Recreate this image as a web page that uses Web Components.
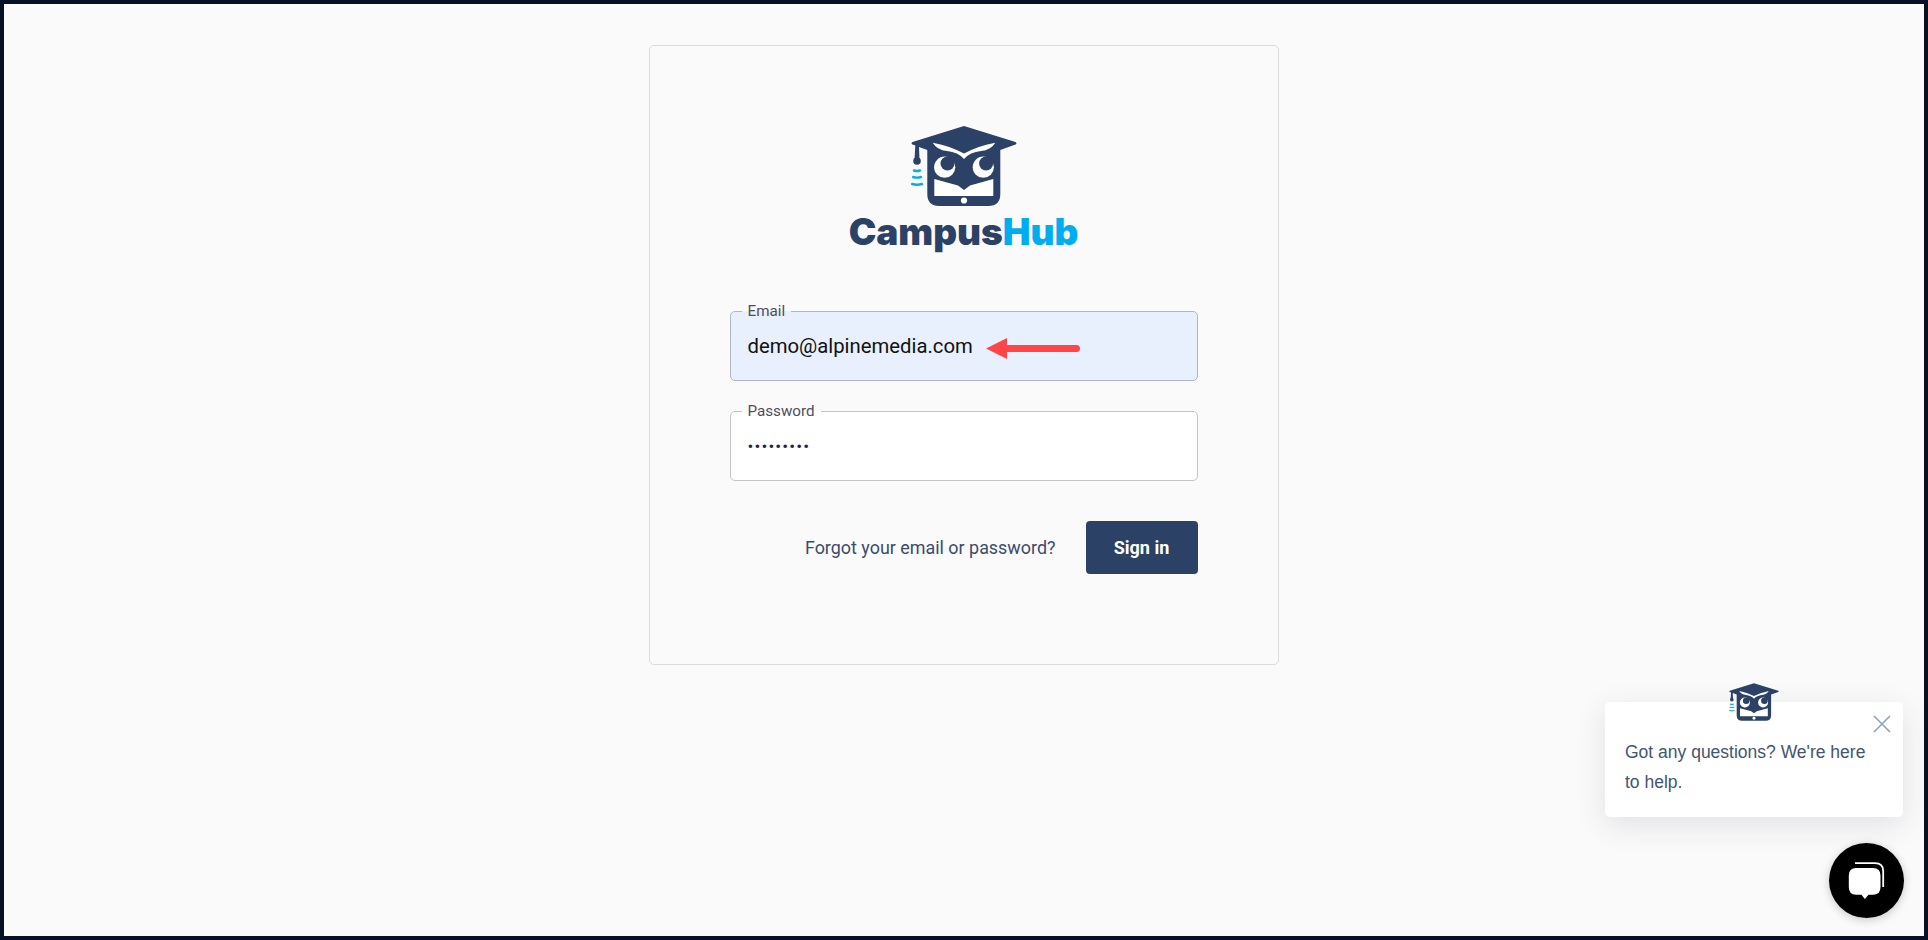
<!DOCTYPE html>
<html>
<head>
<meta charset="utf-8">
<title>CampusHub</title>
<style>
  html, body { margin: 0; height: 100%; }
  body { box-sizing: border-box; height: 940px; border: 4px solid #071126; background: #fafafa; overflow: hidden; position: relative; font-family: Roboto, sans-serif; }
</style>
</head>
<body>
<login-page>
  <login-card>
    <campus-logo slot="logo"></campus-logo>
    <outlined-field label="Email" value="demo@alpinemedia.com" filled arrow></outlined-field>
    <outlined-field label="Password" value="•••••••••" secret></outlined-field>
    <login-actions></login-actions>
  </login-card>
</login-page>
<chat-widget message="Got any questions? We're here to help."></chat-widget>

<script>
// The owl mark is used by both the logo and the chat popup.
const OWL_SVG = `
<svg viewBox="0 0 106 80" width="100%" height="100%" aria-hidden="true">
  <path fill="#2b4165" d="M53 0 L104.5 16 Q106.5 17.3 104.5 18.6 L89.3 24 V68 Q89.3 80 77.3 80 H28.3 Q16.3 80 16.3 68 V24 L8 21 L8.5 34 H3.5 L4.3 19.6 L1.5 18.6 Q-.5 17.3 1.5 16 Z"/>
  <circle cx="6" cy="35" r="3.8" fill="#2b4165"/>
  <g fill="none" stroke="#00aeef" stroke-width="2.4" stroke-linecap="round">
    <path d="M3 44.5 Q6 45.5 9 44.5"/>
    <path d="M2.2 51 Q6 52.2 10 51"/>
    <path d="M1.2 58 Q6 59.4 11 58"/>
  </g>
  <path fill="#fff" d="M21.7 16.7 Q38 19.5 53 27.5 Q68 19.5 84.3 16.7 Q80 24 70 25 Q59 26 53 33 Q47 26 36 25 Q26 24 21.7 16.7 Z"/>
  <circle cx="33.7" cy="41.2" r="10.6" fill="#fff"/>
  <circle cx="72.3" cy="41.2" r="10.6" fill="#fff"/>
  <circle cx="36.5" cy="37.5" r="7" fill="#2b4165"/>
  <circle cx="75.1" cy="37.5" r="7" fill="#2b4165"/>
  <path fill="#fff" d="M23.3 53 L47 59.5 L53 64 L59 59.5 L82.3 53 V70 H23.3 Z"/>
  <circle cx="53" cy="74.5" r="3.1" fill="#fff"/>
</svg>`;

/**
 * Centres the login card on the page.
 */
class LoginPage extends HTMLElement {
  constructor() {
    super();
    this.attachShadow({mode: 'open'});
    this.shadowRoot.innerHTML = `
      <style>
        :host { display: flex; justify-content: center; padding-top: 41px; }
      </style>
      <slot></slot>`;
  }
}

class LoginCard extends HTMLElement {
  constructor() {
    super();
    this.attachShadow({mode: 'open'});
    this.shadowRoot.innerHTML = `
      <style>
        :host { display: block; box-sizing: border-box; width: 630px; height: 620px; margin-left: -1px;
          border: 1px solid #dcdcdc; border-radius: 5px; padding: 80px 80px 0; }
        .logo { display: flex; justify-content: center; margin-bottom: 61px; }
        .fields { display: flex; flex-direction: column; gap: 30px; }
      </style>
      <div class="logo"><slot name="logo"></slot></div>
      <div class="fields"><slot></slot></div>`;
  }
}

class CampusLogo extends HTMLElement {
  constructor() {
    super();
    this.attachShadow({mode: 'open'});
    this.shadowRoot.innerHTML = `
      <style>
        :host { display: flex; flex-direction: column; align-items: center; width: 240px; }
        .mark { width: 106px; height: 80px; }
        .word { font: 900 37px/1 Inter, sans-serif; color: #2b4165; letter-spacing: -.05px; margin-top: 7px; }
        .word b { font-weight: inherit; color: #00aeef; }
      </style>
      <div class="mark">${OWL_SVG}</div>
      <div class="word">Campus<b>Hub</b></div>`;
  }
}

class OutlinedField extends HTMLElement {
  constructor() {
    super();
    this.attachShadow({mode: 'open'});
    const filled = this.hasAttribute('filled');
    const secret = this.hasAttribute('secret');
    this.shadowRoot.innerHTML = `
      <style>
        :host { display: block; position: relative; box-sizing: border-box; height: 70px; padding: 0 17px;
          border: 1px solid ${filled ? '#aeb6cb' : '#c4c4c4'}; border-radius: 5px;
          background: ${filled ? '#e8f0fe' : '#fff'}; }
        .label { position: absolute; left: 11px; top: -10px; padding: 0 6px; height: 18px;
          font-size: 15.2px; line-height: 18px; color: #4d4d62; background: linear-gradient(#fafafa 50%, ${filled ? '#e8f0fe' : '#fff'} 50%); }
        .row { display: flex; align-items: center; gap: 13px; height: 100%; }
        .value { font-size: ${secret ? '17.4px' : '20.3px'}; color: ${secret ? '#1f2440' : '#111'}; letter-spacing: ${secret ? '1.1px' : '0'}; }
        svg { display: block; margin-top: 4px; }
      </style>
      <span class="label">${this.getAttribute('label')}</span>
      <div class="row">
        <span class="value">${this.getAttribute('value')}</span>
        ${this.hasAttribute('arrow') ? `<svg width="94" height="21" viewBox="0 0 94 21"><path fill="#ff4548" d="M0 10.5 L21 0 V7 H90.5 A3.5 3.5 0 0 1 90.5 14 H21 V21 Z"/></svg>` : ''}
      </div>`;
  }
}

class LoginActions extends HTMLElement {
  constructor() {
    super();
    this.attachShadow({mode: 'open'});
    this.shadowRoot.innerHTML = `
      <style>
        :host { display: flex; justify-content: flex-end; align-items: center; gap: 30px; margin-top: 10px; }
        a { font-size: 17.92px; color: #3a4c6c; text-decoration: none; }
        button { width: 112px; height: 53px; border: 0; border-radius: 4px; background: #2b4165; color: #fff;
          font: 700 18px Roboto, sans-serif; }
      </style>
      <a href="#">Forgot your email or password?</a>
      <button type="button">Sign in</button>`;
  }
}

class ChatWidget extends HTMLElement {
  constructor() {
    super();
    this.attachShadow({mode: 'open'});
    this.shadowRoot.innerHTML = `
      <style>
        :host { display: block; position: absolute; left: 1601px; top: 698px; width: 298px; height: 216px; }
        .popup { position: relative; box-sizing: border-box; width: 298px; height: 115px; padding: 35px 20px 0; background: #fff;
          border-radius: 5px; box-shadow: 0 8px 30px rgba(40,50,70,.12);
          font: 17.5px/30px "Liberation Sans", Arial, sans-serif; color: #43556f; }
        .owl { position: absolute; left: 124px; top: -19px; width: 50px; height: 38px; }
        .close { position: absolute; left: 268px; top: 13px; width: 18px; height: 18px; }
        .bubble { position: absolute; left: 224px; top: 141px; width: 75px; height: 75px; border-radius: 50%; background: #000;
          box-shadow: 0 2px 10px rgba(0,0,0,.2); display: flex; align-items: center; justify-content: center; }
      </style>
      <div class="popup">
        <div class="owl">${OWL_SVG}</div>
        <svg class="close" viewBox="0 0 18 18"><path d="M1 1 L17 17 M17 1 L1 17" stroke="#8aa3bf" stroke-width="1.6" fill="none"/></svg>
        ${this.getAttribute('message')}
      </div>
      <div class="bubble">
        <svg width="40" height="40" viewBox="0 0 40 40">
          <path fill="none" stroke="#fff" stroke-width="1.8" d="M8 2.2 H28 Q36.2 2.2 36.2 10 V26"/>
          <path fill="#fff" d="M9 7 H26 Q33.5 7 33.5 14.5 V26 Q33.5 33.8 26 33.8 H21.5 L17.8 38 L14.5 33.8 H9 Q1.8 33.8 1.8 26 V14.5 Q1.8 7 9 7 Z"/>
        </svg>
      </div>`;
  }
}

customElements.define('login-page', LoginPage);
customElements.define('login-card', LoginCard);
customElements.define('campus-logo', CampusLogo);
customElements.define('outlined-field', OutlinedField);
customElements.define('login-actions', LoginActions);
customElements.define('chat-widget', ChatWidget);
</script>
</body>
</html>
